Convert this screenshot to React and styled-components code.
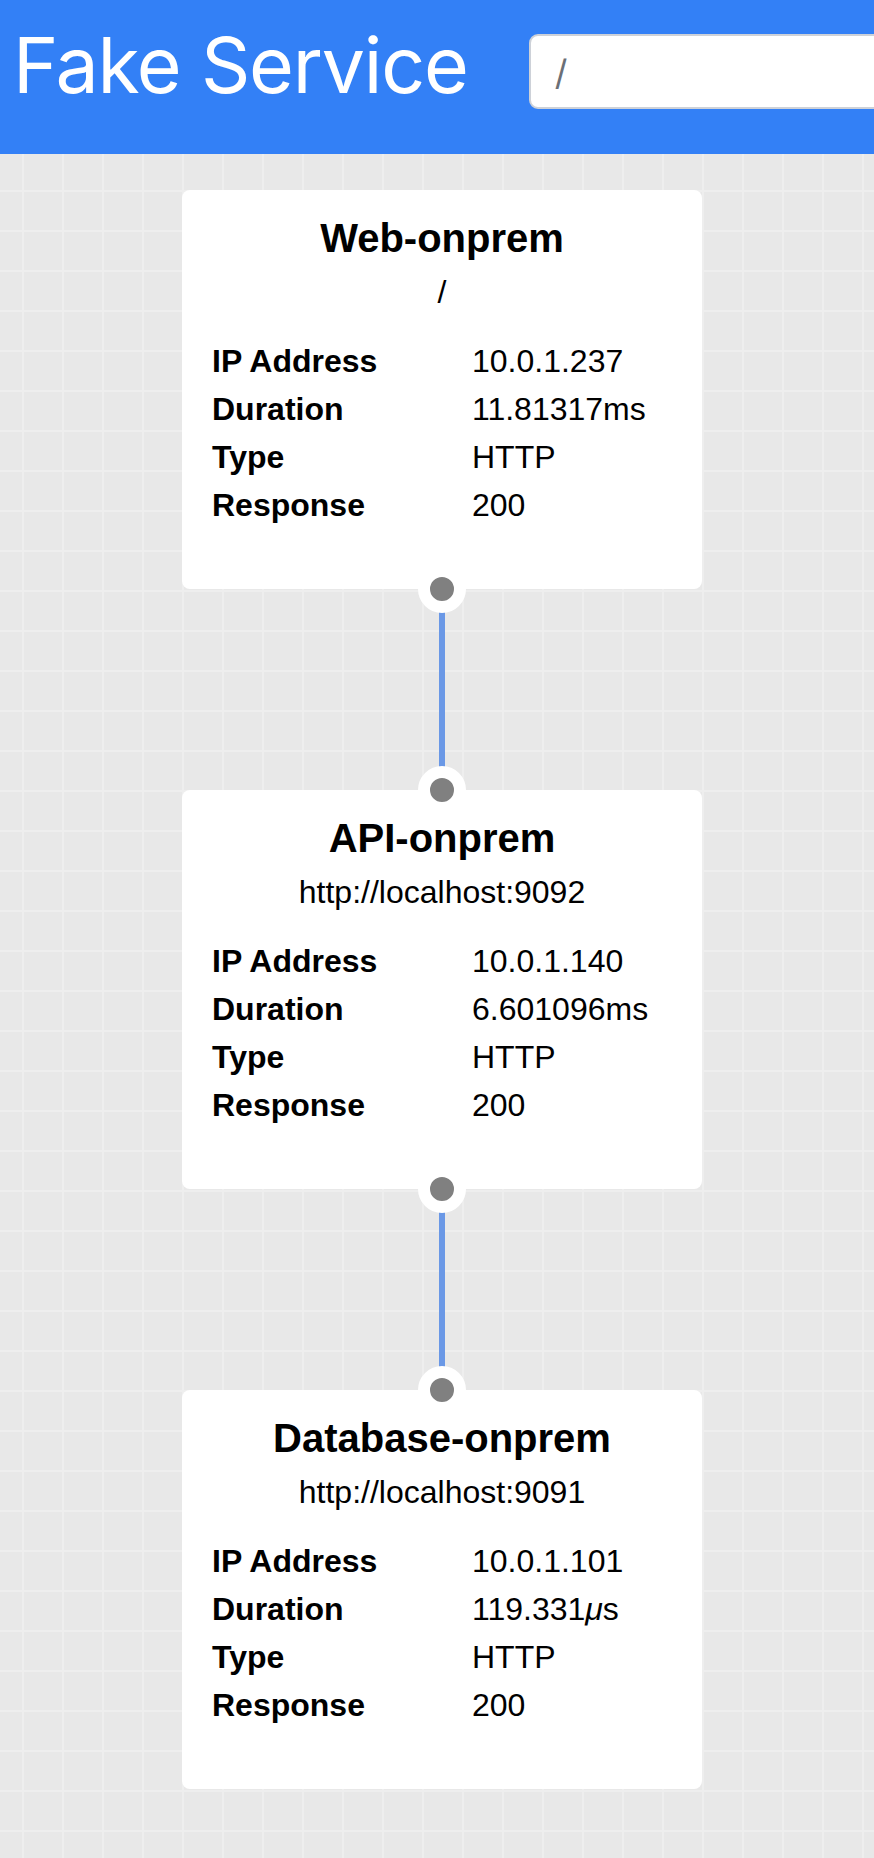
import React from 'react';
import styled, { createGlobalStyle } from 'styled-components';

const GlobalStyle = createGlobalStyle`
    html, body {
        margin: 0;
        padding: 0;
        background: #e9e9e9;
    }
    * {
        box-sizing: border-box;
    }
`;

// Services returned by the upstream calls, in call order
const services = [
    {
        name: 'Web-onprem',
        uri: '/',
        ip: '10.0.1.237',
        duration: '11.81317ms',
        type: 'HTTP',
        code: 200,
    },
    {
        name: 'API-onprem',
        uri: 'http://localhost:9092',
        ip: '10.0.1.140',
        duration: '6.601096ms',
        type: 'HTTP',
        code: 200,
    },
    {
        name: 'Database-onprem',
        uri: 'http://localhost:9091',
        ip: '10.0.1.101',
        duration: '119.331μs',
        type: 'HTTP',
        code: 200,
    },
];

// the micro sign is drawn slanted in the original font
function Duration({ value }) {
    const parts = value.split('μ');
    if (parts.length === 1) return value;
    return (
        <>
            {parts[0]}
            <Micro>μ</Micro>
            {parts[1]}
        </>
    );
}

function App() {
    return (
        <Layout>
            <GlobalStyle />
            <Header>
                <Title>Fake Service</Title>
                <PathInput defaultValue="/" />
            </Header>
            <Canvas>
                <Flow>
                    {services.map((service, index) => (
                        <React.Fragment key={service.name}>
                            {index > 0 && <Edge />}
                            <ServiceNode
                                service={service}
                                hasInput={index > 0}
                                hasOutput={index < services.length - 1}
                            />
                        </React.Fragment>
                    ))}
                </Flow>
            </Canvas>
        </Layout>
    );
}

function ServiceNode({ service, hasInput, hasOutput }) {
    return (
        <Node>
            {hasInput && <Handle $side="top" />}
            <NodeTitle>{service.name}</NodeTitle>
            <NodeUri>{service.uri}</NodeUri>
            <Details>
                <Label>IP Address</Label>
                <Value>{service.ip}</Value>
                <Label>Duration</Label>
                <Value><Duration value={service.duration} /></Value>
                <Label>Type</Label>
                <Value>{service.type}</Value>
                <Label>Response</Label>
                <Value>{service.code}</Value>
            </Details>
            {hasOutput && <Handle $side="bottom" />}
        </Node>
    );
}

const Layout = styled.div`
    display: flex;
    flex-direction: column;
    min-height: 1858px;
`;

const Header = styled.header`
    display: flex;
    align-items: flex-start;
    height: 154px;
    padding-left: 13px;
    background: #3380f6;
    overflow: hidden;
`;

const Title = styled.h1`
    margin: 27px 0 0;
    font-family: Inter, "Liberation Sans", sans-serif;
    font-size: 77px;
    font-weight: 400;
    line-height: 1;
    letter-spacing: -1.2px;
    color: #ffffff;
    white-space: nowrap;
`;

const PathInput = styled.input`
    flex: none;
    width: 420px;
    height: 75px;
    margin: 34px 0 0 61px;
    padding: 0 24px;
    border: 2px solid #cdd1d8;
    border-radius: 9px;
    background: #ffffff;
    font-family: Inter, "Liberation Sans", sans-serif;
    font-size: 35px;
    color: #6b6f76;
    outline: none;
`;

const Canvas = styled.main`
    flex: 1;
    display: flex;
    padding: 36px 0 0 182px;
    background-color: #e8e8e8;
    background-image:
        linear-gradient(to right, #eeeeee 2px, transparent 2px),
        linear-gradient(to bottom, #eeeeee 2px, transparent 2px);
    background-size: 40px 40px;
    background-position: 22px 36px;
`;

const Flow = styled.div`
    display: flex;
    flex-direction: column;
    align-items: center;
    width: 520px;
`;

const Edge = styled.div`
    width: 6px;
    height: 201px;
    background: #6a98e6;
`;

const Node = styled.section`
    position: relative;
    width: 520px;
    height: 399px;
    padding-top: 24px;
    background: #ffffff;
    border-radius: 8px;
    font-family: "Liberation Sans", Arial, sans-serif;
    color: #000000;
`;

const Handle = styled.span`
    position: absolute;
    left: 50%;
    ${(p) => (p.$side === 'top' ? 'top: -24px;' : 'bottom: -24px;')}
    width: 48px;
    height: 48px;
    margin-left: -24px;
    border: 12px solid #ffffff;
    border-radius: 50%;
    background: #808080;
    z-index: 2;
`;

const NodeTitle = styled.h2`
    margin: 0;
    font-size: 40px;
    font-weight: 700;
    line-height: 48px;
    text-align: center;
`;

const NodeUri = styled.div`
    margin-top: 6px;
    font-size: 32px;
    line-height: 48px;
    text-align: center;
`;

const Details = styled.div`
    display: grid;
    grid-template-columns: 260px 1fr;
    margin-top: 21px;
    padding-left: 30px;
    font-size: 32px;
    line-height: 48px;
`;

const Label = styled.div`
    font-weight: 700;
`;

const Value = styled.div`
    font-weight: 400;
`;

const Micro = styled.span`
    font-style: italic;
`;

export default App;
